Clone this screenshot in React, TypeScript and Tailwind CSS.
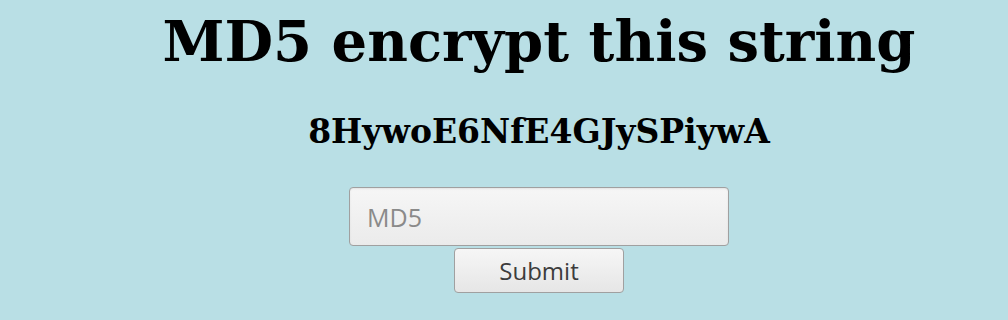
import React from "react";

const App: React.FC = () => {
  return (
    <div className="min-h-[320px] w-full bg-[#b9dfe5] pl-[70px]">
      <div className="flex flex-col items-center">
        <h1 className="mt-[11px] text-[56px] leading-[60px] font-bold text-black [font-family:'DejaVu_Serif',serif]">
          MD5 encrypt this string
        </h1>
        <h3 className="mt-[41px] text-[33px] leading-[40px] font-bold text-black [font-family:'DejaVu_Serif',serif]">
          8HywoE6NfE4GJySPiywA
        </h3>
        <form className="mt-[35px] flex flex-col items-center gap-[2px]" onSubmit={(e) => e.preventDefault()}>
          <input
            type="text"
            placeholder="MD5"
            className="h-[59px] w-[380px] rounded-[4px] border border-[#a0a0a0] bg-gradient-to-b from-[#f6f6f6] to-[#ebebeb] px-[17px] text-[25px] text-[#333] shadow-[inset_0_1px_2px_rgba(0,0,0,0.08)] outline-none placeholder:text-[#8a8a8a] [font-family:'Open_Sans',sans-serif]"
          />
          <button
            type="submit"
            className="h-[45px] w-[170px] rounded-[4px] border border-[#a0a0a0] bg-gradient-to-b from-[#f6f6f6] to-[#e6e6e6] text-[24px] text-[#3c3c3c] [font-family:'Open_Sans',sans-serif]"
          >
            Submit
          </button>
        </form>
      </div>
    </div>
  );
};

export default App;
